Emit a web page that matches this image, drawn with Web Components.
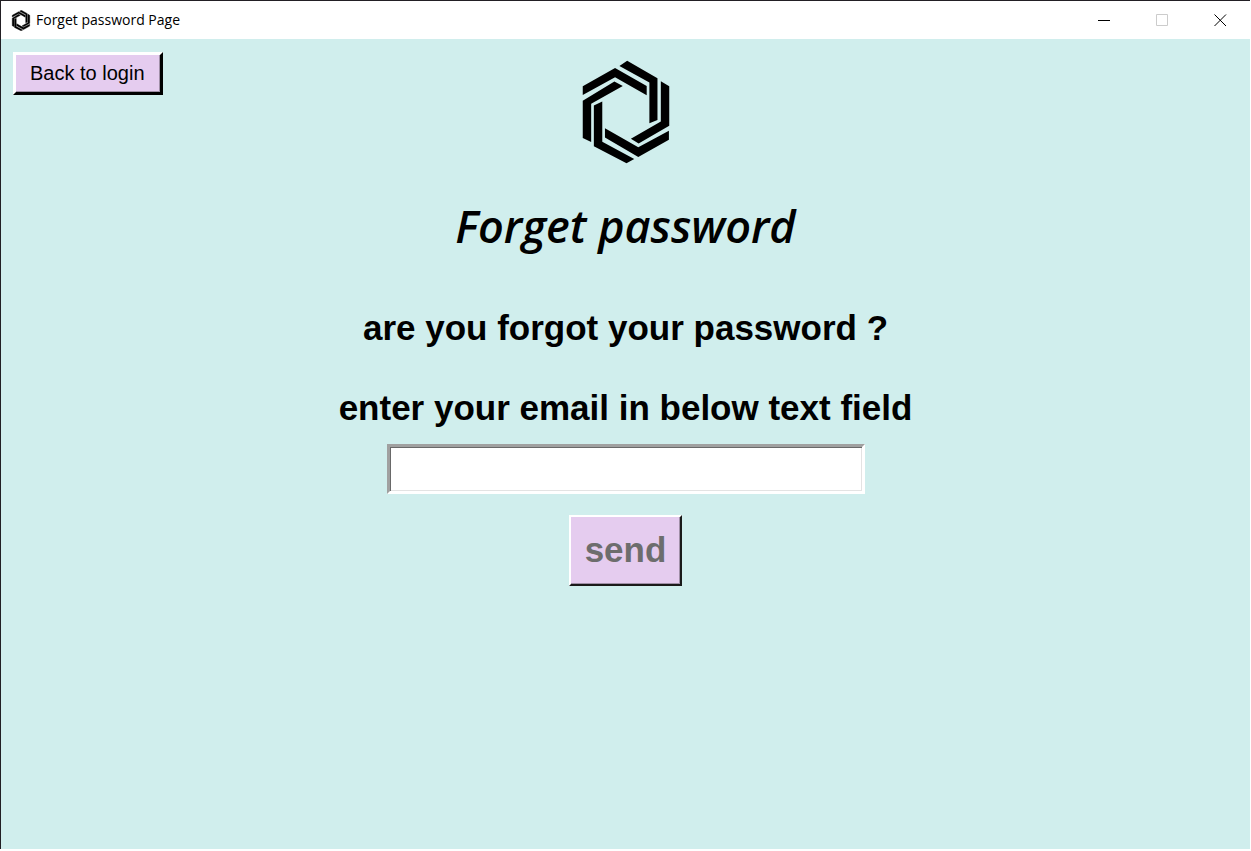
<!DOCTYPE html>
<html lang="en">
<head>
<meta charset="utf-8">
<title>Forget password Page</title>
<style>
html, body { height: 100%; margin: 0; background: #fff; }
body { box-sizing: border-box; padding: 0 1px 2px 0; font-family: "Liberation Sans", Arial, sans-serif; color: #000; }
</style>
</head>
<body>
<app-window caption="Forget password Page">
  <bevel-button slot="nav">Back to login</bevel-button>
  <reset-form></reset-form>
</app-window>
<script>
const define = (name, html, setup) => {
  const template = document.createElement('template');
  template.innerHTML = html;
  customElements.define(name, class extends HTMLElement {
    constructor() {
      super();
      this.attachShadow({ mode: 'open' }).append(template.content.cloneNode(true));
    }
    connectedCallback() { if (setup) setup(this, this.shadowRoot); }
  });
};

define('hex-logo', `
<style>
:host { display: block; }
svg { display: block; width: 100%; height: 100%; }
</style>
<svg viewBox="36 30 261 309" aria-hidden="true">
  <path d="M147 48L170 32L260 84V208L236 218V97Z"/>
  <path d="M38 108L134 54L228 107V135L134 81L38 134Z"/>
  <path d="M38 151L132 94L157 107L63 160V274L38 262Z"/>
  <path d="M71 165L96 153V273L191 324L168 337L71 286Z"/>
  <path d="M104 233L203 289L294 240V267L203 318L104 260Z"/>
  <path d="M270 93L295 108V225L204 278L181 264L270 213Z"/>
</svg>`);

define('bevel-button', `
<style>
:host { display: block; }
button {
  box-sizing: border-box; display: block; margin: 0; padding: 0 15px 2px 14px; height: 43px;
  font: 20px/24px "Liberation Sans", Arial, sans-serif; color: #000;
  background: #e5ccef; border: 3px solid; border-color: #fff #000 #000 #fff; border-radius: 0;
  box-shadow: inset -1px -1px #a08fa7; white-space: nowrap;
}
:host([large]) button {
  height: 71px; padding: 0 14px 2px; font-size: 35px; font-weight: bold; line-height: 40px;
  border-width: 2px; border-color: #fff #1a1a1a #1a1a1a #fff;
}
button:disabled { color: #6d6d6d; }
</style>
<button type="button"><slot></slot></button>`, (host, root) => {
  root.querySelector('button').disabled = host.hasAttribute('disabled');
});

define('title-bar', `
<style>
:host { display: flex; align-items: center; height: 38px; background: #fff; padding-left: 9px; }
hex-logo { width: 22px; height: 21px; margin-right: 4px; stroke: #000; stroke-width: 6px; }
.caption { flex: 1; font: 14px/20px "Open Sans", "Segoe UI", sans-serif; }
button { width: 58px; height: 38px; border: 0; padding: 0 1px 0 0; background: none; display: grid; place-items: center; }
svg { display: block; fill: none; stroke: #000; }
.max svg { stroke: #ccc; }
</style>
<hex-logo></hex-logo>
<span class="caption"><slot></slot></span>
<button type="button" aria-label="Minimize"><svg width="13" height="13"><path d="M0 6.5H12"/></svg></button>
<button type="button" class="max" aria-label="Maximize" disabled><svg width="13" height="13"><path d="M.5 .5H11.5V11.5H.5Z"/></svg></button>
<button type="button" aria-label="Close"><svg width="13" height="13"><path d="M.5 .5L12 12M12 .5L.5 12"/></svg></button>`);

define('app-window', `
<style>
:host {
  box-sizing: border-box; display: flex; flex-direction: column; min-height: 100%;
  border: solid #221f24; border-width: 1px 0 0 1px; background: #d0eeed;
}
main { flex: 1; display: grid; grid-template-columns: 1fr auto 1fr; align-items: start; justify-items: start; padding: 13px 12px; }
</style>
<title-bar></title-bar>
<main><slot name="nav"></slot><slot></slot></main>`, (host, root) => {
  root.querySelector('title-bar').textContent = host.getAttribute('caption');
});

define('reset-form', `
<style>
:host { display: block; }
form { display: flex; flex-direction: column; align-items: center; margin: 0; text-align: center; }
hex-logo { width: 88px; height: 104px; margin-top: 8px; }
h1 { margin: 32px 0 0; font: italic 600 45px/60px "Open Sans", sans-serif; }
p, label { margin: 40px 0 0; font-size: 35px; line-height: 40px; font-weight: bold; }
p { margin-top: 52px; }
input {
  box-sizing: border-box; width: 478px; height: 50px; margin: 16px 0 21px; padding: 0 8px;
  font: 28px "Liberation Sans", Arial, sans-serif; background: #fff; border-radius: 0; outline: 0;
  border: 3px solid; border-color: #a0a0a0 #fff #fff #a0a0a0;
  box-shadow: inset 1px 1px #696969, inset -1px -1px #e3e3e3;
}
</style>
<form>
  <hex-logo></hex-logo>
  <h1>Forget password</h1>
  <p>are you forgot your password ?</p>
  <label for="email">enter your email in below text field</label>
  <input id="email" type="email">
  <bevel-button large disabled>send</bevel-button>
</form>`);
</script>
</body>
</html>
